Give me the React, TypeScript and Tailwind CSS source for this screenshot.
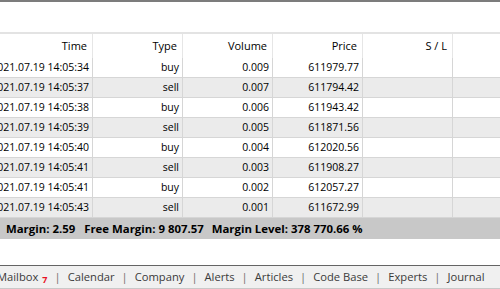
import React from "react";

const rows = [
  { time: "2021.07.19 14:05:34", type: "buy", volume: "0.009", price: "611979.77" },
  { time: "2021.07.19 14:05:37", type: "sell", volume: "0.007", price: "611794.42" },
  { time: "2021.07.19 14:05:38", type: "buy", volume: "0.006", price: "611943.42" },
  { time: "2021.07.19 14:05:39", type: "sell", volume: "0.005", price: "611871.56" },
  { time: "2021.07.19 14:05:40", type: "buy", volume: "0.004", price: "612020.56" },
  { time: "2021.07.19 14:05:41", type: "sell", volume: "0.003", price: "611908.27" },
  { time: "2021.07.19 14:05:41", type: "buy", volume: "0.002", price: "612057.27" },
  { time: "2021.07.19 14:05:43", type: "sell", volume: "0.001", price: "611672.99" },
];

const tabs = ["Calendar", "Company", "Alerts", "Articles", "Code Base", "Experts", "Journal"];

export default function App() {
  return (
    <div
      className="w-[500px] h-[289px] overflow-hidden bg-white flex flex-col text-black whitespace-nowrap"
      style={{ fontFamily: '"Open Sans", "Noto Sans", sans-serif' }}
    >
      {/* top edge of the panel */}
      <div className="h-[2px] bg-[#7c7c7c] shrink-0" />
      <div className="h-[30px] shrink-0" />

      {/* trade table */}
      <div className="border-t-2 border-[#e3e3e3] -ml-[7px] w-[520px] text-[10.5px]">
        <div className="flex h-[24px] items-center bg-white text-[11px]">
          <div className="w-[100px] h-full flex items-center justify-end pr-[5px] border-r border-[#e6e6e6]">Time</div>
          <div className="w-[90px] h-full flex items-center justify-end pr-[5px] border-r border-[#e6e6e6]">Type</div>
          <div className="w-[90px] h-full flex items-center justify-end pr-[5px] border-r border-[#e6e6e6]">Volume</div>
          <div className="w-[90px] h-full flex items-center justify-end pr-[5px] border-r border-[#e6e6e6]">Price</div>
          <div className="w-[90px] h-full flex items-center justify-end pr-[5px] border-r border-[#e6e6e6]">S / L</div>
          <div className="w-[60px] h-full" />
        </div>

        {rows.map((r, i) => (
          <div
            key={i}
            className={`flex h-[20px] border-b border-[#d6d6d6] ${i % 2 === 0 ? "bg-white" : "bg-[#ebebeb]"}`}
          >
            <div className="w-[100px] flex items-center justify-end pr-[3px] border-r border-[#d6d6d6]">{r.time}</div>
            <div className="w-[90px] flex items-center justify-end pr-[3px] border-r border-[#d6d6d6]">{r.type}</div>
            <div className="w-[90px] flex items-center justify-end pr-[3px] border-r border-[#d6d6d6]">{r.volume}</div>
            <div className="w-[90px] flex items-center justify-end pr-[3px] border-r border-[#d6d6d6]">{r.price}</div>
            <div className="w-[90px] border-r border-[#d6d6d6]" />
            <div className="w-[60px]" />
          </div>
        ))}

        <div className="h-[21px] bg-[#c8c8c8] flex items-center pl-[13px] font-bold text-[11.4px]">
          <span>Margin: 2.59</span>
          <span className="ml-[9px]">Free Margin: 9 807.57</span>
          <span className="ml-[8px]">Margin Level: 378 770.66 %</span>
        </div>
      </div>

      <div className="flex-1" />

      {/* bottom tabs */}
      <div className="h-[24px] shrink-0 border-t border-[#646464] border-b border-b-[#c8c8c8] bg-[#f0f0f0] flex items-center text-[11.2px] text-[#3a3a3a] -ml-[3px]">
        <span>Mailbox</span>
        <span className="text-[#e81123] font-bold text-[9px] self-end mb-[2px] ml-[4px]">7</span>
        {tabs.map((t) => (
          <React.Fragment key={t}>
            <span className="text-[#6e6e6e] mx-[7px]">|</span>
            <span>{t}</span>
          </React.Fragment>
        ))}
      </div>
    </div>
  );
}
